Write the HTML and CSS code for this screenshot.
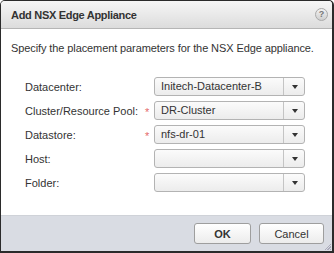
FILE: index.html
```html
<!DOCTYPE html>
<html lang="en">
<head>
    <meta charset="UTF-8">
    <title>Add NSX Edge Appliance</title>
    <link rel="stylesheet" href="styles.css">
</head>
<body>
    <div class="dialog">
        <div class="titlebar">
            <span class="title">Add NSX Edge Appliance</span>
            <span class="help">?</span>
        </div>
        <div class="content">
            <div class="intro">Specify the placement parameters for the NSX Edge appliance.</div>
            <div class="form">
                <div class="label">Datacenter:</div>
                <div class="req"></div>
                <div class="combo"><span class="value">Initech-Datacenter-B</span><span class="arrow"></span></div>

                <div class="label">Cluster/Resource Pool:</div>
                <div class="req">*</div>
                <div class="combo"><span class="value">DR-Cluster</span><span class="arrow"></span></div>

                <div class="label">Datastore:</div>
                <div class="req">*</div>
                <div class="combo"><span class="value">nfs-dr-01</span><span class="arrow"></span></div>

                <div class="label">Host:</div>
                <div class="req"></div>
                <div class="combo"><span class="value"></span><span class="arrow"></span></div>

                <div class="label">Folder:</div>
                <div class="req"></div>
                <div class="combo"><span class="value"></span><span class="arrow"></span></div>
            </div>
        </div>
        <div class="footer">
            <button class="btn btn-ok">OK</button>
            <button class="btn btn-cancel">Cancel</button>
            <span class="grip"></span>
        </div>
    </div>
</body>
</html>
```

FILE: styles.css
```css
html, body {
    margin: 0;
    padding: 0;
    width: 334px;
    height: 253px;
    background: #fff;
    overflow: hidden;
}
body {
    font-family: "Liberation Sans", Arial, sans-serif;
    font-size: 11px;
    color: #333;
}
.dialog {
    box-sizing: border-box;
    width: 334px;
    height: 253px;
    border: 1px solid #2b2b2b;
    border-right-width: 2px;
    border-bottom-width: 2px;
    border-radius: 5px 5px 0 0;
    display: flex;
    flex-direction: column;
    overflow: hidden;
    position: relative;
}
.titlebar {
    height: 27px;
    flex: none;
    display: flex;
    align-items: center;
    justify-content: space-between;
    padding: 0 4px 0 10px;
    background: linear-gradient(#f6f6f6, #dcdcdc);
    border-bottom: 1px solid #b5b5b5;
}
.title {
    font-weight: bold;
    font-size: 11px;
    color: #333;
    letter-spacing: -0.3px;
}
.help {
    width: 11px;
    height: 11px;
    border-radius: 50%;
    border: 1px solid #a9a9a9;
    background: linear-gradient(#f2f2f2, #cfcfcf);
    color: #777;
    font-size: 9px;
    font-weight: bold;
    line-height: 11px;
    text-align: center;
}
.content {
    flex: 1;
    padding: 13px 10px 0 10px;
}
.intro {
    color: #333;
    letter-spacing: -0.1px;
}
.form {
    display: grid;
    grid-template-columns: 120px 9px 151px;
    grid-auto-rows: 19px;
    row-gap: 5px;
    align-items: center;
    margin: 23px 0 0 14px;
}
.label {
    color: #333;
}
.req {
    color: #e46a6a;
    font-size: 11px;
    line-height: 11px;
    padding-top: 3px;
}
.combo {
    box-sizing: border-box;
    height: 19px;
    display: flex;
    border: 1px solid #b3b3b3;
    border-radius: 3px;
    background: linear-gradient(#fbfbfb, #ececec);
}
.value {
    flex: 1;
    padding-left: 6px;
    line-height: 17px;
    color: #333;
}
.arrow {
    width: 20px;
    border-left: 1px solid #c4c4c4;
    position: relative;
}
.arrow::after {
    content: "";
    position: absolute;
    left: 8px;
    top: 7px;
    border-left: 3px solid transparent;
    border-right: 3px solid transparent;
    border-top: 4px solid #333;
}
.footer {
    flex: none;
    height: 35px;
    background: #d9dce3;
    border-top: 1px solid #cfd2d8;
    display: flex;
    align-items: center;
    justify-content: flex-end;
    gap: 8px;
    padding-right: 8px;
    position: relative;
}
.btn {
    height: 21px;
    box-sizing: border-box;
    border: 1px solid #9e9e9e;
    border-radius: 3px;
    background: linear-gradient(#ffffff, #ececec);
    font-family: "Liberation Sans", Arial, sans-serif;
    font-size: 11px;
    color: #333;
    padding: 0;
}
.btn-ok {
    width: 57px;
    font-weight: bold;
}
.btn-cancel {
    width: 65px;
}
.grip {
    position: absolute;
    right: 1px;
    bottom: 1px;
    width: 7px;
    height: 7px;
    background: repeating-linear-gradient(135deg, transparent 0 1px, #aab 1px 2px);
    clip-path: polygon(100% 0, 100% 100%, 0 100%);
}
```
